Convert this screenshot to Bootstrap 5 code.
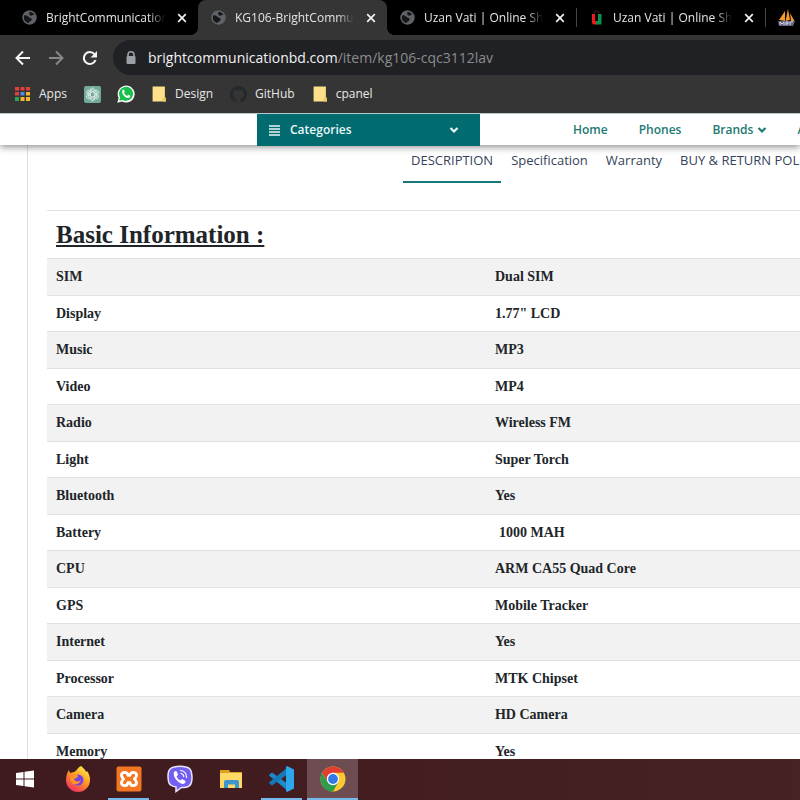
<!DOCTYPE html>
<html lang="en">
<head>
<meta charset="utf-8">
<meta name="viewport" content="width=device-width, initial-scale=1">
<title>KG106-BrightCommunication</title>
<link href="https://cdn.jsdelivr.net/npm/bootstrap@5.3.0/dist/css/bootstrap.min.css" rel="stylesheet">
<style>
body { font-family: "Open Sans", "Noto Sans", sans-serif; font-size: 12px; line-height: 16px; color: #212529; }
button { font: inherit; }
.tab-strip { background: #000; height: 35px; padding-left: 9px; }
.browser-tab { position: relative; width: 189px; padding: 0 8px 0 13px; color: #e4e4e4; }
.browser-tab.current { background: #353535; border-radius: 8px 8px 0 0; }
.browser-tab.current::before, .browser-tab.current::after { content: ""; position: absolute; bottom: 0; width: 8px; height: 8px; }
.browser-tab.current::before { left: -8px; background: radial-gradient(circle at 0 0, transparent 8px, #353535 8px); }
.browser-tab.current::after { right: -8px; background: radial-gradient(circle at 100% 0, transparent 8px, #353535 8px); }
.divided::before { content: ""; position: absolute; left: 0; top: 8px; width: 1px; height: 19px; background: #464646; }
.tab-title { width: 119px; margin: 0 9px; color: inherit; text-decoration: none; -webkit-mask-image: linear-gradient(90deg, #000 86%, transparent); mask-image: linear-gradient(90deg, #000 86%, transparent); }
.toolbar-area { background: #353535; }
.toolbar-row { height: 45px; padding-left: 14px; }
.address { background: #202124; height: 35px; border-radius: 18px 0 0 18px; margin-left: 15px; padding-left: 11px; font-size: 14px; color: #8b8c8e; }
.address-text { margin-left: 10px; }
.address-text b { font-weight: 400; color: #f1f1f1; }
.bookmarks { height: 33px; padding-left: 15px; padding-bottom: 5px; }
.bookmarks a { color: #e8e8e8; text-decoration: none; }
.bookmarks a.d-flex { padding-right: 1px; }
.site-nav { height: 32px; position: relative; z-index: 2; box-shadow: 0 2px 7px rgba(0,0,0,.45); border-top: 1px solid #b9c9ca; }
.site-nav a { color: #217a72; font-weight: 600; text-decoration: none; }
.categories { background: #016b70; color: #e9f7f7; width: 223px; height: 32px; margin-left: 257px; padding: 0 21px 0 12px; font-weight: 600; }
.categories span { margin-left: 10px; }
.nav-items { margin-left: 93px; gap: 31px; }
.detail { margin-left: 27px; border-left: 1px solid #dcdfe2; padding-left: 19px; }
.detail-tabs { height: 38px; margin-left: 356px; gap: 2px; font-size: 13px; }
.detail-tabs a { color: #34435b; padding: 7px 8px 0; text-decoration: none; font-weight: 500; }
.detail-tabs a.caps { font-weight: 400; }
.detail-tabs a.selected { border-bottom: 2px solid #17777a; }
.specs { margin-top: 27px; font-family: "Liberation Serif", serif; font-size: 14px; border-color: #dee2e6; color: #212529; }
.specs th, .specs td { padding: 0 9px; height: 37px; font-weight: 700; vertical-align: middle; border-top: 1px solid #dee2e6; border-bottom: 0; }
.specs th { width: 58.3%; }
.specs tbody tr:nth-child(even) > * { height: 36px; }
.specs tbody tr:nth-child(odd) > * { background: #f2f2f2; }
.specs thead th { height: 48px; }
.specs h2 { font-size: 25px; line-height: 28px; font-weight: 700; text-decoration: underline; margin: 0; }
.indented { padding-left: 4px; }
.taskbar { height: 41px; background: linear-gradient(90deg, #3f1b1f, #431d20 50%, #462322); }
.task { width: 51px; border: 0; background: none; padding: 0; border-bottom: 2px solid transparent; }
.task.start { width: 52px; padding-right: 3px; }
.task.open { background: linear-gradient(#76b9ed, #76b9ed) 50% 100% / 41px 2px no-repeat border-box; }
.task.front { background: #6d4d51; border-bottom-color: #76b9ed; }
</style>
<script src="https://cdn.jsdelivr.net/npm/bootstrap@5.3.0/dist/js/bootstrap.bundle.min.js"></script>
</head>
<body class="d-flex flex-column vh-100 overflow-hidden">
<svg class="d-none" aria-hidden="true">
  <symbol id="globe" viewBox="0 0 16 16"><circle cx="8" cy="8" r="7.500" fill="#5f6368"/><path d="M2 6c3-1 4 1 6 2s3 1 2 3-3 1-3 3.500C4 14 1 11 2 6zM8 2c3-1 5 1 6 3-2-.5-2 1-4 1S7 4 8 2z" fill="#161718"/><circle cx="8" cy="8" r="6.800" fill="none" stroke="#5f6368" stroke-width="1.400"/></symbol>
  <symbol id="cross" viewBox="0 0 10 10"><path d="M1.200 1.200l7.600 7.600M8.800 1.200L1.200 8.800" stroke="#f2f2f2" stroke-width="1.700"/></symbol>
  <symbol id="folder" viewBox="0 0 14 15"><path d="M1 .5h11.500v10.500h1v3.500H1z" fill="#ffe08a"/><path d="M10.500 14.500v-3.500h3v3.500z" fill="#eec75d"/></symbol>
  <symbol id="chevron" viewBox="0 0 10 8"><path d="M1.500 2l3.500 3.500L8.500 2" fill="none" stroke="currentColor" stroke-width="2.200"/></symbol>
</svg>

<header class="flex-shrink-0">
  <div class="tab-strip d-flex overflow-hidden">
    <div class="browser-tab d-flex align-items-center flex-shrink-0"><svg width="15" height="15"><use href="#globe"/></svg><a href="#" class="tab-title text-nowrap overflow-hidden">BrightCommunication</a><button class="btn p-0 border-0 d-flex justify-content-center flex-fill" aria-label="Close tab"><svg width="10" height="10"><use href="#cross"/></svg></button></div>
    <div class="browser-tab current d-flex align-items-center flex-shrink-0"><svg width="15" height="15"><use href="#globe"/></svg><a href="#" class="tab-title text-nowrap overflow-hidden">KG106-BrightCommu</a><button class="btn p-0 border-0 d-flex justify-content-center flex-fill" aria-label="Close tab"><svg width="10" height="10"><use href="#cross"/></svg></button></div>
    <div class="browser-tab d-flex align-items-center flex-shrink-0"><svg width="15" height="15"><use href="#globe"/></svg><a href="#" class="tab-title text-nowrap overflow-hidden">Uzan Vati | Online Sho</a><button class="btn p-0 border-0 d-flex justify-content-center flex-fill" aria-label="Close tab"><svg width="10" height="10"><use href="#cross"/></svg></button></div>
    <div class="browser-tab divided d-flex align-items-center flex-shrink-0"><svg width="15" height="15" viewBox="0 0 15 15"><path d="M5 3.500V2q2.500-2.500 5 0v1.500" fill="none" stroke="#452020"/><path d="M3 4h3v7h2v3.500H5q-2 0-2-2z" fill="#f01919"/><path d="M9 4h3.500v10.500H7V11h2z" fill="#07934b"/></svg><a href="#" class="tab-title text-nowrap overflow-hidden">Uzan Vati | Online Sho</a><button class="btn p-0 border-0 d-flex justify-content-center flex-fill" aria-label="Close tab"><svg width="10" height="10"><use href="#cross"/></svg></button></div>
    <div class="browser-tab divided d-flex align-items-center flex-shrink-0"><svg width="17" height="18" viewBox="0 0 17 18"><path d="M1 11L7 2v10zM7.500 12L10 0l2 11zM12 4l4.500 8H13z" fill="#f39a2d"/><path d="M0 12h17l-2 5H1z" fill="#60657f"/><path d="M2 16v-3l2 2 2-2v3m2-3v3m0-3h2v2H8m4 1v-3h3" fill="none" stroke="#cfd2df"/></svg></div>
  </div>
  <div class="toolbar-area">
    <div class="toolbar-row d-flex align-items-center">
      <button class="btn p-0 border-0 d-flex" aria-label="Back"><svg width="18" height="16" viewBox="0 0 18 16"><path d="M16 8H3M9 1.500L2.500 8 9 14.500" fill="none" stroke="#f4f4f4" stroke-width="2"/></svg></button>
      <button class="btn p-0 border-0 d-flex ms-3" aria-label="Forward"><svg width="17" height="16" viewBox="0 0 17 16"><path d="M1 8h13M8 1.500L14.500 8 8 14.500" fill="none" stroke="#888" stroke-width="2"/></svg></button>
      <button class="btn p-0 border-0 d-flex ms-3" aria-label="Reload"><svg width="17" height="16" viewBox="0 0 17 16"><path d="M13.500 4.200A6 6 0 1 0 14.500 10" fill="none" stroke="#f4f4f4" stroke-width="2.100"/><path d="M16 1v6.500H9.500z" fill="#f4f4f4"/></svg></button>
      <div class="address d-flex align-items-center flex-fill"><svg width="14" height="14" viewBox="0 0 14 14"><path d="M4 6V3.800a3 3 0 0 1 6 0V6" fill="none" stroke="#9aa0a6" stroke-width="1.600"/><rect x="2.500" y="5" width="9" height="8" rx="1" fill="#9aa0a6"/></svg><span class="address-text"><b>brightcommunicationbd.com</b>/item/kg106-cqc3112lav</span></div>
    </div>
    <nav class="bookmarks d-flex align-items-center" aria-label="Bookmarks">
      <a href="#" class="d-flex align-items-center me-3"><svg class="me-2" width="16" height="16" viewBox="0 0 16 16"><path d="M0 1h4v3.500H0zM5.500 1h4v3.500h-4zM11 1h4v3.500h-4zM0 6h4v3.500H0z" fill="#e2413a"/><path d="M5.500 6h4v3.500h-4z" fill="#4a8cf0"/><path d="M11 6h4v3.500h-4zM5.500 11h4v4h-4zM11 11h4v4h-4z" fill="#f4b72e"/><path d="M0 11h4v4H0z" fill="#2da457"/></svg>Apps</a>
      <a href="#" class="me-3" aria-label="ChatGPT"><svg width="17" height="17" viewBox="0 0 17 17"><rect width="17" height="17" rx="2" fill="#74aa9c"/><g fill="none" stroke="#e5f2ee" stroke-width=".8"><path id="petal" d="M6 6.800V4.600a2.600 2.600 0 0 1 4.700-1.500M6 6.800v3.100l2.500 1.500M6 4.900l2.500-1.400 3.200 1.900"/><use href="#petal" transform="rotate(60 8.500 8.500)"/><use href="#petal" transform="rotate(120 8.500 8.500)"/><use href="#petal" transform="rotate(180 8.500 8.500)"/><use href="#petal" transform="rotate(240 8.500 8.500)"/><use href="#petal" transform="rotate(300 8.500 8.500)"/></g></svg></a>
      <a href="#" class="me-3" aria-label="WhatsApp"><svg width="18" height="18" viewBox="0 0 18 18"><path d="M.3 17.700L1.600 13A8.500 8.500 0 1 1 5 16.500z" fill="#fff"/><path d="M2.200 15.800l.9-3.300a7 7 0 1 1 2.500 2.400z" fill="#17c04b"/><path d="M5.500 5q1-1 1.600 0l.7 1.700-.9 1.200q1.200 2.200 3.300 3l1-1.200 2.200 1.100q.2 2-2 2.300C8 13.200 4 8.500 5.500 5z" fill="#fff"/></svg></a>
      <a href="#" class="d-flex align-items-center me-3"><svg class="me-2" width="16" height="16"><use href="#folder"/></svg>Design</a>
      <a href="#" class="d-flex align-items-center me-3"><svg class="me-2" width="17" height="17" viewBox="0 0 16 16"><path fill="#24292e" d="M8 0C3.580 0 0 3.580 0 8c0 3.540 2.290 6.530 5.470 7.590.4.070.55-.17.55-.38v-1.490c-2.010.37-2.530-.49-2.690-.94-.09-.23-.48-.94-.82-1.130-.28-.15-.68-.52-.01-.53.63-.01 1.080.58 1.230.82.720 1.210 1.870.87 2.330.66.070-.52.280-.87.510-1.070-1.780-.2-3.640-.89-3.640-3.950 0-.87.310-1.590.82-2.150-.08-.2-.36-1.020.08-2.120 0 0 .67-.21 2.200.82a7.600 7.600 0 0 1 4 0c1.530-1.040 2.200-.82 2.200-.82.440 1.100.16 1.920.08 2.120.51.560.82 1.270.82 2.150 0 3.070-1.870 3.750-3.650 3.950.29.250.54.730.54 1.480v2.200c0 .21.150.46.550.38A8 8 0 0 0 16 8c0-4.420-3.580-8-8-8z"/></svg>GitHub</a>
      <a href="#" class="d-flex align-items-center"><svg class="me-2" width="16" height="16"><use href="#folder"/></svg>cpanel</a>
    </nav>
  </div>
</header>

<main class="flex-fill overflow-hidden bg-white">
  <nav class="site-nav bg-white d-flex" aria-label="Shop">
    <button class="categories border-0 d-flex align-items-center flex-shrink-0"><svg width="11" height="11" viewBox="0 0 11 11"><path d="M0 1h11M0 4h11M0 7h11M0 10h11" stroke="currentColor" stroke-width="1.600"/></svg><span class="me-auto">Categories</span><svg width="10" height="8"><use href="#chevron"/></svg></button>
    <div class="nav-items d-flex align-items-center text-nowrap"><a href="#">Home</a><a href="#">Phones</a><a href="#">Brands <svg width="10" height="8"><use href="#chevron"/></svg></a><a href="#">A</a></div>
  </nav>
  <section class="detail">
    <nav class="detail-tabs d-flex text-nowrap" aria-label="Product details"><a href="#" class="caps selected">DESCRIPTION</a><a href="#">Specification</a><a href="#">Warranty</a><a href="#" class="caps">BUY &amp; RETURN POLICY</a></nav>
    <table class="specs w-100">
      <thead><tr><th colspan="2"><h2>Basic Information :</h2></th></tr></thead>
      <tbody>
        <tr><th scope="row">SIM</th><td>Dual SIM</td></tr>
        <tr><th scope="row">Display</th><td>1.77" LCD</td></tr>
        <tr><th scope="row">Music</th><td>MP3</td></tr>
        <tr><th scope="row">Video</th><td>MP4</td></tr>
        <tr><th scope="row">Radio</th><td>Wireless FM</td></tr>
        <tr><th scope="row">Light</th><td>Super Torch</td></tr>
        <tr><th scope="row">Bluetooth</th><td>Yes</td></tr>
        <tr><th scope="row">Battery</th><td><span class="indented">1000 MAH</span></td></tr>
        <tr><th scope="row">CPU</th><td>ARM CA55 Quad Core</td></tr>
        <tr><th scope="row">GPS</th><td>Mobile Tracker</td></tr>
        <tr><th scope="row">Internet</th><td>Yes</td></tr>
        <tr><th scope="row">Processor</th><td>MTK Chipset</td></tr>
        <tr><th scope="row">Camera</th><td>HD Camera</td></tr>
        <tr><th scope="row">Memory</th><td>Yes</td></tr>
      </tbody>
    </table>
  </section>
</main>

<footer class="taskbar d-flex flex-shrink-0">
  <button class="task start" aria-label="Start"><svg width="18" height="18" viewBox="0 0 18 18"><path d="M0 3l7.500-1v6.500H0zM8.500 1.800L18 .5v8H8.500zM0 9.500h7.500V16L0 15zM8.500 9.500H18v8l-9.500-1.300z" fill="#fff"/></svg></button>
  <button class="task" aria-label="Firefox"><svg width="26" height="26" viewBox="0 0 26 26"><defs><linearGradient id="fx" x1=".8" y1="0" x2=".2" y2="1"><stop offset="0" stop-color="#fff04a"/><stop offset=".45" stop-color="#ff9a22"/><stop offset="1" stop-color="#f0246b"/></linearGradient></defs><path d="M16 0c2 2 4 3 5 6l1-1c2 3 3 5 3 9a12 12 0 0 1-24 0c0-4 1-7 3-10l1 3 4-1c2 0 3-4 7-6z" fill="url(#fx)"/><circle cx="13" cy="14" r="5.500" fill="#7542e5"/><path d="M6 9c3-2 6-1 7 1 0 2-3 2-4 3 1 3 5 3 7 1-1 4-6 6-9 3-2-2-2-5-1-8z" fill="#ff9426"/></svg></button>
  <button class="task open" aria-label="XAMPP"><svg width="26" height="26" viewBox="0 0 26 26"><rect x=".5" y=".5" width="25" height="25" rx="2" fill="#f37623"/><path d="M8.500 6.300q-3.300.5-3 3.200.2 2 2.200 3.500-2 1.500-2.200 3.500-.3 2.700 3 3.200 3 0 3.500-3h2q.5 3 3.500 3 3.300-.5 3-3.200-.2-2-2.200-3.500 2-1.500 2.200-3.500.3-2.700-3-3.200-3 0-3.500 3h-2q-.5-3-3.500-3z" fill="none" stroke="#fff" stroke-width="2.800" stroke-linejoin="round"/></svg></button>
  <button class="task" aria-label="Viber"><svg width="26" height="28" viewBox="0 0 26 28"><path d="M7 2q6-1.500 12 0 5 1 5.500 6 1 5 0 9-1 5-7 5.500h-3L9 26.500v-4.500Q2 21 1.500 16q-1-5 0-9Q2.500 3 7 2z" fill="#7360f2" stroke="#ebe5fb" stroke-width="1.500"/><path d="M7 7q2-2 3 0l1 3-1.500 1.500q1 3 4 4l1.500-1.500 3.500 2q0 3-3 3C10 17.500 5.500 11 7 7z" fill="#fff"/><path d="M13.500 5.500q6 .5 6 7M14 8.500q2.500.5 2.700 3" fill="none" stroke="#fff" stroke-width="1.200" stroke-linecap="round"/></svg></button>
  <button class="task" aria-label="File Explorer"><svg width="24" height="22" viewBox="0 0 24 22"><path d="M1 2h9l1 2h12v16H1z" fill="#dfa21c"/><path d="M1 5h22v15H1z" fill="#ffd968"/><path d="M5 20v-6q0-2 2-2h11q2 0 2 2v6h-4v-3.500H9V20z" fill="#3d95cf"/></svg></button>
  <button class="task open" aria-label="Visual Studio Code"><svg width="27" height="26" viewBox="0 0 27 26"><path d="M2 8l2-1.500L20 18v7L1 9.500z" fill="#1c88c9"/><path d="M2 18l2 1.500L20 8V1L1 16.500z" fill="#1778b8"/><path d="M19 0l7 3.500v19L19 26l-1-1V1z" fill="#2da7ec"/></svg></button>
  <button class="task front" aria-label="Chrome"><svg width="26" height="26" viewBox="0 0 26 26"><circle cx="13" cy="13" r="12.500" fill="#fbc92d"/><path d="M2.200 6.700A12.500 12.500 0 0 1 23.800 6.700H13L7.600 16z" fill="#e33d32"/><path d="M2.200 6.700A12.500 12.500 0 0 0 13 25.500l5.400-9.400L13 19l-5.400-3z" fill="#2e9d4b"/><circle cx="13" cy="13" r="6.200" fill="#fff"/><circle cx="13" cy="13" r="4.900" fill="#3479ec"/></svg></button>
</footer>
</body>
</html>
